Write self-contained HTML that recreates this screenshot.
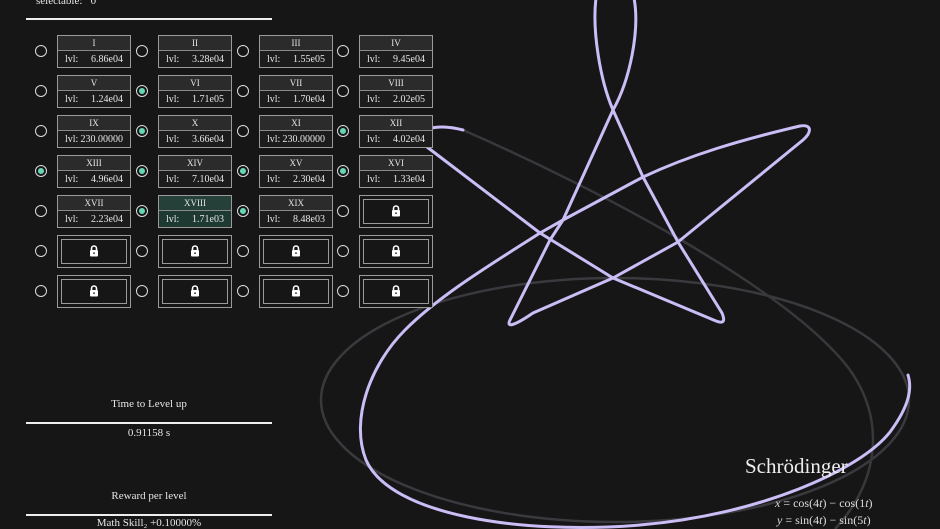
<!DOCTYPE html><html><head><meta charset="utf-8"><style>
body{margin:0;width:940px;height:529px;overflow:hidden;background:#161617;font-family:"Liberation Serif",serif;color:#e6e6e6;position:relative}
.a{position:absolute}
.r{position:absolute;width:12px;height:12px;border:1.3px solid #ddd;border-radius:50%;box-sizing:border-box}
.r.on::after{content:"";position:absolute;left:1.8px;top:1.8px;width:5.8px;height:5.8px;border-radius:50%;background:#67d6b5}
.b{position:absolute;width:74px;height:33px;border:1px solid #9a9a9a;box-sizing:border-box;background:#1c1c1c;font-size:10px}
.b .t{height:14px;border-bottom:1px solid #8a8a8a;background:#2b2b2b;text-align:center;line-height:14px;font-size:9px}
.b .v{height:17px;line-height:17px;padding:0 7px;display:flex;justify-content:space-between}
.b.sel{background:#1e3832}.b.sel .t{background:#244039}
.b.l{background:#161616}
.b.l::before{content:"";position:absolute;left:3px;top:3px;right:3px;bottom:3px;border:1px solid #9a9a9a}
.lk{position:absolute;left:31px;top:9px}
.hl{position:absolute;height:2px;background:#eee}
.c{position:absolute;text-align:center;width:246px;left:26px;font-size:11px}
</style></head><body>
<div class="a" style="left:36px;top:-5px;font-size:11px">selectable:&nbsp;&nbsp;&nbsp;0</div>
<div class="hl" style="left:26px;top:18px;width:246px"></div>
<svg class="a" style="left:0;top:0" width="940" height="529">
<ellipse cx="615" cy="400" rx="294" ry="122" fill="none" stroke="#3a3a3e" stroke-width="2.5"/>
<path d="M463,130 C600,190 790,290 850,370 C885,420 880,480 835,529" fill="none" stroke="#38383c" stroke-width="2.5"/>
<g fill="none" stroke="#cbbdf5" stroke-width="3" stroke-linecap="round" stroke-linejoin="round">
<path d="M463,130 C440,124 412,126 427,147 L540,233 L613,278 L716,321 C726,325 724,318 722,313 L678,242 L643,177 L613,110 C600,80 592,30 596,-2"/>
<path d="M634,-2 C640,30 630,80 613,110 L563,220 L550,240 L510,320 C506,328 514,326 533,313 L613,278 L678,242 L803,140 C812,132 812,124 800,126 C740,140 690,155 643,177 L563,220 L540,233 C490,265 440,295 405,330 C370,365 350,420 366,460 C390,515 520,535 640,525 C760,515 860,470 890,432 C910,405 912,388 908,375"/>
</g>
</svg>
<div id="g"></div>
<div class="c" style="top:398px">Time to Level up</div>
<div class="hl" style="left:26px;top:422px;width:246px"></div>
<div class="c" style="top:427px">0.91158 s</div>
<div class="c" style="top:490px">Reward per level</div>
<div class="hl" style="left:26px;top:514px;width:246px"></div>
<div class="c" style="top:517px">Math Skill₂ +0.10000%</div>
<div class="a" style="left:745px;top:454px;font-size:21px;color:#eee">Schrödinger</div>
<div class="a" style="left:775px;top:496px;font-size:12px;color:#ddd"><i>x</i> = cos(4<i>t</i>) − cos(1<i>t</i>)</div>
<div class="a" style="left:777px;top:513px;font-size:12px;color:#ddd"><i>y</i> = sin(4<i>t</i>) − sin(5<i>t</i>)</div>
<script>
var d=[["I","6.86e04"],["II","3.28e04"],["III","1.55e05"],["IV","9.45e04"],["V","1.24e04"],["VI","1.71e05"],["VII","1.70e04"],["VIII","2.02e05"],["IX","230.00000"],["X","3.66e04"],["XI","230.00000"],["XII","4.02e04"],["XIII","4.96e04"],["XIV","7.10e04"],["XV","2.30e04"],["XVI","1.33e04"],["XVII","2.23e04"],["XVIII","1.71e03"],["XIX","8.48e03"]];
var on=[5,9,11,12,13,14,15,17,18];
var lock='<svg class="lk" width="10" height="12" viewBox="0 0 10 12"><path d="M2.5,5 V3.5 a2.5,2.5 0 0 1 5,0 V5" fill="none" stroke="#fff" stroke-width="1.6"/><rect x="1" y="5" width="8" height="6.5" rx="1" fill="#fff"/><circle cx="5" cy="8.2" r="0.9" fill="#333"/></svg>';
var h="";
for(var i=0;i<28;i++){var r=Math.floor(i/4),c=i%4;var x=[57,158,259,359][c],y=35+r*40;
h+='<div class="r'+(on.indexOf(i)>=0?' on':'')+'" style="left:'+(x-22)+'px;top:'+(y+10)+'px"></div>';
if(i<19){h+='<div class="b'+(i==17?' sel':'')+'" style="left:'+x+'px;top:'+y+'px"><div class="t">'+d[i][0]+'</div><div class="v"><span>lvl:</span><span>'+d[i][1]+'</span></div></div>';}
else h+='<div class="b l" style="left:'+x+'px;top:'+y+'px">'+lock+'</div>';}
document.getElementById("g").innerHTML=h;
</script>
</body></html>
